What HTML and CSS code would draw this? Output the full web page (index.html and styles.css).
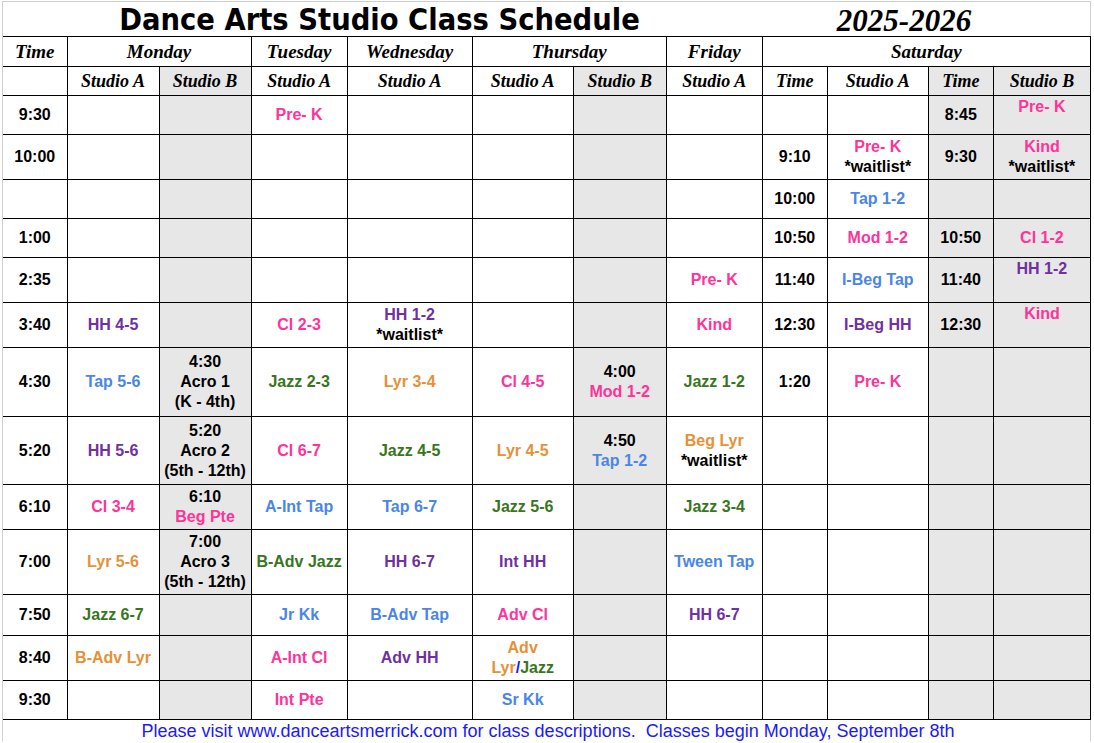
FILE: index.html
```html
<!DOCTYPE html>
<html lang="en">
<head>
<meta charset="utf-8">
<title>Dance Arts Studio Class Schedule</title>
<link rel="stylesheet" href="styles.css">
</head>
<body>
<div class="sheet">
  <div class="title-bar">
    <div class="title">Dance Arts Studio Class Schedule</div>
    <div class="year">2025-2026</div>
  </div>
  <table class="schedule">
    <colgroup>
      <col class="c-time"><col class="c-mona"><col class="c-monb"><col class="c-tue"><col class="c-wed"><col class="c-thua"><col class="c-thub"><col class="c-fri"><col class="c-sattime"><col class="c-sata"><col class="c-sattime2"><col class="c-satb">
    </colgroup>
    <thead>
      <tr class="h1">
        <th class="first">Time</th>
        <th colspan="2">Monday</th>
        <th>Tuesday</th>
        <th>Wednesday</th>
        <th colspan="2">Thursday</th>
        <th>Friday</th>
        <th colspan="4">Saturday</th>
      </tr>
      <tr class="h2">
        <th class="first"></th>
        <th>Studio A</th>
        <th class="g">Studio B</th>
        <th>Studio A</th>
        <th>Studio A</th>
        <th>Studio A</th>
        <th class="g">Studio B</th>
        <th>Studio A</th>
        <th>Time</th>
        <th>Studio A</th>
        <th class="g">Time</th>
        <th class="g">Studio B</th>
      </tr>
    </thead>
    <tbody>
      <tr class="r39">
        <td class="first">9:30</td><td></td><td class="g"></td><td class="pk">Pre- K</td><td></td><td></td><td class="g"></td><td></td>
        <td></td><td></td><td class="g">8:45</td><td class="g top pk">Pre- K</td>
      </tr>
      <tr class="r45">
        <td class="first">10:00</td><td></td><td class="g"></td><td></td><td></td><td></td><td class="g"></td><td></td>
        <td>9:10</td><td><span class="pk">Pre- K</span><br>*waitlist*</td><td class="g">9:30</td><td class="g"><span class="pk">Kind</span><br>*waitlist*</td>
      </tr>
      <tr class="r39">
        <td class="first"></td><td></td><td class="g"></td><td></td><td></td><td></td><td class="g"></td><td></td>
        <td>10:00</td><td class="bl">Tap 1-2</td><td class="g"></td><td class="g"></td>
      </tr>
      <tr class="r39">
        <td class="first">1:00</td><td></td><td class="g"></td><td></td><td></td><td></td><td class="g"></td><td></td>
        <td>10:50</td><td class="pk">Mod 1-2</td><td class="g">10:50</td><td class="g pk">Cl 1-2</td>
      </tr>
      <tr class="r45">
        <td class="first">2:35</td><td></td><td class="g"></td><td></td><td></td><td></td><td class="g"></td><td class="pk">Pre- K</td>
        <td>11:40</td><td class="bl">I-Beg Tap</td><td class="g">11:40</td><td class="g top pu">HH 1-2</td>
      </tr>
      <tr class="r45">
        <td class="first">3:40</td><td class="pu">HH 4-5</td><td class="g"></td><td class="pk">Cl 2-3</td><td><span class="pu">HH 1-2</span><br>*waitlist*</td><td></td><td class="g"></td><td class="pk">Kind</td>
        <td>12:30</td><td class="pu">I-Beg HH</td><td class="g">12:30</td><td class="g top pk">Kind</td>
      </tr>
      <tr class="r69">
        <td class="first">4:30</td><td class="bl">Tap 5-6</td><td class="g">4:30<br>Acro 1<br>(K - 4th)</td><td class="gr">Jazz 2-3</td><td class="or">Lyr 3-4</td><td class="pk">Cl 4-5</td><td class="g">4:00<br><span class="pk">Mod 1-2</span></td><td class="gr">Jazz 1-2</td>
        <td>1:20</td><td class="pk">Pre- K</td><td class="g"></td><td class="g"></td>
      </tr>
      <tr class="r68">
        <td class="first">5:20</td><td class="pu">HH 5-6</td><td class="g">5:20<br>Acro 2<br>(5th - 12th)</td><td class="pk">Cl 6-7</td><td class="gr">Jazz 4-5</td><td class="or">Lyr 4-5</td><td class="g">4:50<br><span class="bl">Tap 1-2</span></td><td><span class="or">Beg Lyr</span><br>*waitlist*</td>
        <td></td><td></td><td class="g"></td><td class="g"></td>
      </tr>
      <tr class="r45">
        <td class="first">6:10</td><td class="pk">Cl 3-4</td><td class="g">6:10<br><span class="pk">Beg Pte</span></td><td class="bl">A-Int Tap</td><td class="bl">Tap 6-7</td><td class="gr">Jazz 5-6</td><td class="g"></td><td class="gr">Jazz 3-4</td>
        <td></td><td></td><td class="g"></td><td class="g"></td>
      </tr>
      <tr class="r65">
        <td class="first">7:00</td><td class="or">Lyr 5-6</td><td class="g">7:00<br>Acro 3<br>(5th - 12th)</td><td class="gr">B-Adv Jazz</td><td class="pu">HH 6-7</td><td class="pu">Int HH</td><td class="g"></td><td class="bl">Tween Tap</td>
        <td></td><td></td><td class="g"></td><td class="g"></td>
      </tr>
      <tr class="r41">
        <td class="first">7:50</td><td class="gr">Jazz 6-7</td><td class="g"></td><td class="bl">Jr Kk</td><td class="bl">B-Adv Tap</td><td class="pk">Adv Cl</td><td class="g"></td><td class="pu">HH 6-7</td>
        <td></td><td></td><td class="g"></td><td class="g"></td>
      </tr>
      <tr class="r45">
        <td class="first">8:40</td><td class="or">B-Adv Lyr</td><td class="g"></td><td class="pk">A-Int Cl</td><td class="pu">Adv HH</td><td><span class="or">Adv</span><br><span class="or">Lyr</span><span class="db">/</span><span class="gr">Jazz</span></td><td class="g"></td><td></td>
        <td></td><td></td><td class="g"></td><td class="g"></td>
      </tr>
      <tr class="r39">
        <td class="first">9:30</td><td></td><td class="g"></td><td class="pk">Int Pte</td><td></td><td class="bl">Sr Kk</td><td class="g"></td><td></td>
        <td></td><td></td><td class="g"></td><td class="g"></td>
      </tr>
    </tbody>
  </table>
  <div class="footer">Please visit www.danceartsmerrick.com for class descriptions.&nbsp; Classes begin Monday, September 8th</div>
</div>
</body>
</html>
```
FILE: styles.css
```css
html, body {
  margin: 0;
  padding: 0;
  background: #ffffff;
}

.sheet {
  margin: 1px 0 0 2px;
  width: 1089px;
  height: 740px;
  border: 1px solid #cfcfcf;
  border-bottom: none;
  box-sizing: border-box;
  display: flex;
  flex-direction: column;
}

.title-bar {
  display: flex;
  height: 34px;
  align-items: center;
}

.title {
  width: 759px;
  text-align: center;
  padding-right: 6px;
  box-sizing: border-box;
  font-family: "DejaVu Sans Condensed", "DejaVu Sans", sans-serif;
  font-weight: bold;
  font-size: 30.5px;
  color: #000;
  padding-top: 0;
}

.year {
  flex: 1;
  text-align: center;
  padding-right: 44px;
  font-family: "Liberation Serif", serif;
  font-weight: bold;
  font-style: italic;
  font-size: 31px;
  color: #000;
  padding-top: 4px;
}

.schedule {
  border-collapse: collapse;
  table-layout: fixed;
  width: 1088px;
  font-family: "Liberation Sans", Arial, sans-serif;
  font-weight: bold;
  font-size: 16px;
  line-height: 20px;
  color: #000;
}

.c-time { width: 64px; }
.c-mona { width: 92px; }
.c-monb { width: 92px; }
.c-tue { width: 96px; }
.c-wed { width: 125px; }
.c-thua { width: 101px; }
.c-thub { width: 93px; }
.c-fri { width: 96px; }
.c-sattime { width: 65px; }
.c-sata { width: 101px; }
.c-sattime2 { width: 65px; }
.c-satb { width: 97px; }

.schedule th,
.schedule td {
  border: 1px solid #000;
  padding: 0;
  text-align: center;
  vertical-align: middle;
  white-space: nowrap;
  overflow: hidden;
}

.schedule th.first,
.schedule td.first {
  border-left: none;
}

.schedule th {
  font-family: "Liberation Serif", "Times New Roman", serif;
  font-style: italic;
  font-weight: bold;
}

.h1 { height: 30px; }
.h1 th { font-size: 19px; }
.h2 { height: 29px; }
.h2 th { font-size: 18px; }

.r39 { height: 39px; }
.r41 { height: 41px; }
.r45 { height: 45px; }
.r65 { height: 65px; }
.r68 { height: 68px; }
.r69 { height: 69px; }

.schedule .g { background: #e7e7e7; }
.schedule td.top { vertical-align: top; padding-top: 1px; }

.pk { color: #ff3399; }
.pu { color: #7030a0; }
.bl { color: #4a86e8; }
.gr { color: #38761d; }
.or { color: #e69138; }
.db { color: #1c1cff; }

.footer {
  height: 22px;
  line-height: 22px;
  text-align: center;
  font-family: "Liberation Sans", Arial, sans-serif;
  font-size: 18px;
  color: #1a1aff;
  border-bottom: 1px solid #cfcfcf;
  width: 1092px;
  margin-left: -1px;
  box-sizing: border-box;
}
```
